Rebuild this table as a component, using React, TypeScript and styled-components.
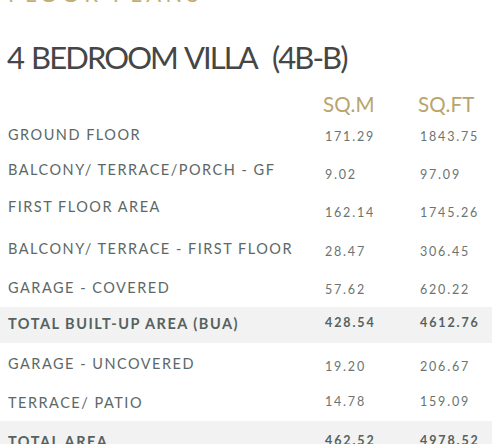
import React from 'react';
import styled, {createGlobalStyle} from "styled-components";

type Row = {
    label: string,
    sqm: string,
    sqft: string,
    total?: boolean,
    h: number,
    lt: number,
    nt: number,
}

const rows: Row[] = [
    {label: 'GROUND FLOOR', sqm: '171.29', sqft: '1843.75', h: 37, lt: 12, nt: 15},
    {label: 'BALCONY/ TERRACE/PORCH - GF', sqm: '9.02', sqft: '97.09', h: 36, lt: 10, nt: 16},
    {label: 'FIRST FLOOR AREA', sqm: '162.14', sqft: '1745.26', h: 39, lt: 11, nt: 18},
    {label: 'BALCONY/ TERRACE - FIRST FLOOR', sqm: '28.47', sqft: '306.45', h: 39, lt: 14, nt: 18},
    {label: 'GARAGE - COVERED', sqm: '57.62', sqft: '620.22', h: 39, lt: 14, nt: 17},
    {label: 'TOTAL BUILT-UP AREA (BUA)', sqm: '428.54', sqft: '4612.76', total: true, h: 36, lt: 11, nt: 11},
    {label: 'GARAGE - UNCOVERED', sqm: '19.20', sqft: '206.67', h: 39, lt: 15, nt: 19},
    {label: 'TERRACE/ PATIO', sqm: '14.78', sqft: '159.09', h: 39, lt: 15, nt: 15},
    {label: 'TOTAL AREA', sqm: '462.52', sqft: '4978.52', total: true, h: 40, lt: 15, nt: 15},
]

const App = (): JSX.Element => {
    return (
        <>
            <GlobalStyle/>
            <Page>
                <Eyebrow>FLOOR PLANS</Eyebrow>
                <Heading>4 BEDROOM VILLA&nbsp; (4B-B)</Heading>
                <HeadRow>
                    <span/>
                    <Unit>SQ.M</Unit>
                    <Unit>SQ.FT</Unit>
                </HeadRow>
                {rows.map((r) => (
                    <AreaRow key={r.label} $total={r.total} $h={r.h}>
                        <Label $total={r.total} $top={r.lt}>{r.label}</Label>
                        <Value $total={r.total} $top={r.nt}>{r.sqm}</Value>
                        <Value $total={r.total} $top={r.nt}>{r.sqft}</Value>
                    </AreaRow>
                ))}
            </Page>
        </>
    );
}

// styles
const GlobalStyle = createGlobalStyle`
  html, body {
    margin: 0;
    padding: 0;
    background: #fff;
    overflow: hidden;
  }
  body {
    font-family: Lato, "Noto Sans", sans-serif;
  }
`

const Page = styled.div`
  width: 492px;
  display: flex;
  flex-direction: column;
`

const Eyebrow = styled.div`
  margin: -17px 0 0 8px;
  font-size: 22px;
  line-height: 22px;
  letter-spacing: 4.5px;
  color: #c2ad72;
`

const Heading = styled.h1`
  margin: 32px 0 0 7px;
  font-size: 31px;
  line-height: 40px;
  font-weight: 400;
  color: #464646;
  letter-spacing: -1.9px;
  word-spacing: 2px;
`

const grid = `
  display: grid;
  grid-template-columns: 315px 95px 1fr;
  padding-left: 8px;
`

const HeadRow = styled.div`
  ${grid};
  margin-top: 16px;
  height: 24px;
  align-items: start;
`

const Unit = styled.div`
  font-size: 20.5px;
  line-height: 24px;
  color: #b9a46c;
  letter-spacing: 0.2px;
  margin-top: -1px;
`

const AreaRow = styled.div<{ $total?: boolean, $h: number }>`
  ${grid};
  height: ${p => p.$h}px;
  align-items: start;
  background: ${p => p.$total ? '#f2f2f2' : 'transparent'};
`

const Label = styled.div<{ $total?: boolean, $top: number }>`
  margin-top: ${p => p.$top - 2}px;
  font-size: 14.5px;
  line-height: 16px;
  letter-spacing: 1.5px;
  font-weight: ${p => p.$total ? 700 : 400};
  color: ${p => p.$total ? '#55625f' : '#5c6866'};
  white-space: nowrap;
`

const Value = styled.div<{ $total?: boolean, $top: number }>`
  margin: ${p => p.$top - 3}px 0 0 2px;
  font-size: 12.5px;
  line-height: 15px;
  letter-spacing: ${p => p.$total ? '1.9px' : '1.8px'};
  font-weight: ${p => p.$total ? 700 : 400};
  color: ${p => p.$total ? '#55625f' : '#6a7472'};
  white-space: nowrap;
`

export default App;
